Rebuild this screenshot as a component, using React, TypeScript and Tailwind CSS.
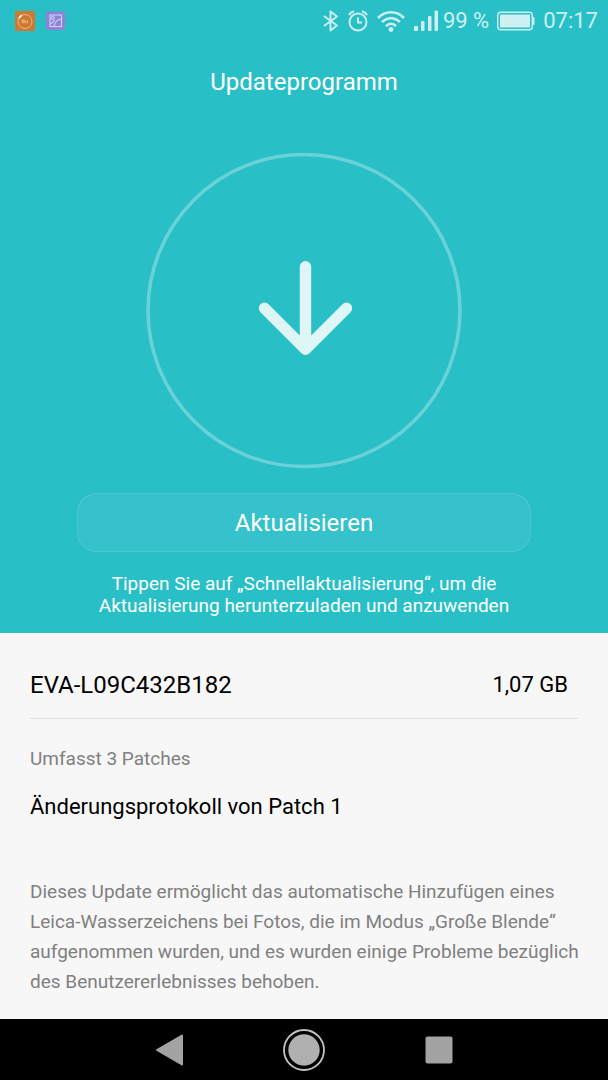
const CHANGES =
  'Dieses Update ermöglicht das automatische Hinzufügen eines Leica-Wasserzeichens bei Fotos, die im Modus „Große Blende“ aufgenommen wurden, und es wurden einige Probleme bezüglich des Benutzererlebnisses behoben.';

function MiAppIcon() {
  return (
    <svg width="20" height="20" viewBox="0 0 20 20" fill="none">
      <rect width="20" height="20" rx="1.5" fill="#cf7830" />
      <circle cx="10" cy="10.5" r="7" stroke="#e9b98c" strokeWidth="1" />
      <path d="M3.5 6.5 6.5 3.8" stroke="#cf7830" strokeWidth="4" />
      <path d="M4 7 6.8 4.2" stroke="#fff" strokeWidth="1.8" />
      <path d="M7.3 12.2V9.2h2.2q.9 0 .9.9v2.1M8.9 10.3v1.9M12.3 9.2v3" stroke="#efc9a6" strokeWidth="0.9" />
    </svg>
  );
}

function GalleryIcon() {
  return (
    <svg width="20" height="20" viewBox="0 0 20 20" fill="none">
      <rect y="0.5" width="19" height="18.5" rx="3.5" fill="#957ed8" />
      <g stroke="#b9dcf3" strokeWidth="1.1">
        <rect x="4" y="4" width="11.5" height="11.5" />
        <circle cx="6.8" cy="7" r="1.5" />
        <path d="M8 15.5c.5-4 3.5-7 7.5-7.500M4.500 13 8.500 9.500" />
      </g>
    </svg>
  );
}

function BluetoothIcon() {
  return (
    <svg width="16" height="22" viewBox="0 0 16 22" fill="none" stroke="currentColor" strokeWidth="1.9">
      <path d="M1 6 14 15.5 7.5 20.5V1.5L14 6.5 1 16" strokeLinejoin="round" />
    </svg>
  );
}

function AlarmIcon() {
  return (
    <svg width="20" height="22" viewBox="0 0 20 22" fill="none" stroke="currentColor" strokeWidth="1.9">
      <circle cx="10" cy="12" r="8.5" />
      <path d="M10 7.5V12.5H14M1 5Q2.500 2 6 1.200M19 5Q17.500 2 14 1.200" />
    </svg>
  );
}

function WifiIcon() {
  return (
    <svg width="28" height="22" viewBox="0 0 28 22" fill="none" stroke="currentColor" strokeWidth="2.6">
      <path d="M1 8Q6.500 2.300 14 2.300T27 8M5 12.200Q9 8.200 14 8.200T23 12.200M9 16.200Q11.200 13.800 14 13.800T19 16.200" />
      <circle cx="14" cy="19.5" r="2.4" fill="currentColor" stroke="none" />
    </svg>
  );
}

function SignalIcon() {
  return (
    <svg width="24" height="22" viewBox="0 0 24 22" fill="currentColor">
      <rect y="16" width="4" height="5" rx="1" />
      <rect x="7" y="11" width="3.500" height="10" rx="1" />
      <rect x="14" y="6" width="3.500" height="15" rx="1" />
      <rect x="20.500" y="0.500" width="3.500" height="20.500" rx="1" />
    </svg>
  );
}

function BatteryIcon() {
  return (
    <svg width="38" height="20" viewBox="0 0 38 20">
      <rect x="0.7" y="1.2" width="34.6" height="17.6" rx="3" fill="none" stroke="currentColor" strokeWidth="1.4" />
      <rect x="3" y="3.5" width="30" height="13" fill="currentColor" />
      <path d="M35.5 6h1q1 0 1 1v6q0 1-1 1h-1z" fill="currentColor" />
    </svg>
  );
}

function StatusBar() {
  return (
    <div className="flex h-[41px] items-center justify-between pl-[15px] pr-[10px] text-[22px] text-[#cdf0f2]">
      <div className="flex items-center gap-[11px]">
        <MiAppIcon />
        <GalleryIcon />
      </div>
      <div className="flex items-center">
        <div className="mr-[5px] flex items-center gap-[9px]">
          <BluetoothIcon />
          <AlarmIcon />
          <WifiIcon />
          <SignalIcon />
        </div>
        <span className="mr-2">99 %</span>
        <BatteryIcon />
        <span className="ml-2">07:17</span>
      </div>
    </div>
  );
}

function DownloadCircle() {
  return (
    <svg width="316" height="316" viewBox="0 0 316 316" fill="none" className="text-white">
      <circle cx="158" cy="157.5" r="156" stroke="currentColor" strokeOpacity="0.3" strokeWidth="3.5" />
      <path
        d="M159.500 113.700V196M118.500 155.300l41 41 41-41"
        stroke="#dff6f7"
        strokeWidth="11.4"
        strokeLinecap="round"
        strokeLinejoin="round"
      />
    </svg>
  );
}

function NavBar() {
  return (
    <nav className="mt-auto flex h-[61px] items-center justify-center gap-24 bg-black">
      <button type="button" aria-label="Zurück" className="flex w-[35px] justify-center">
        <svg width="30" height="34" viewBox="0 0 30 34">
          <path d="M2 17 27 2.500V31.500Z" fill="#a3a3a3" stroke="#a3a3a3" strokeWidth="2" strokeLinejoin="round" />
        </svg>
      </button>
      <button type="button" aria-label="Startseite">
        <svg width="42" height="42" viewBox="0 0 42 42">
          <circle cx="21" cy="21" r="20" fill="none" stroke="#c4c4c4" strokeWidth="1.8" />
          <circle cx="21" cy="21" r="15.7" fill="#b0b0b0" />
        </svg>
      </button>
      <button type="button" aria-label="Letzte Apps" className="flex w-[35px] justify-center">
        <svg width="28" height="28" viewBox="0 0 28 28">
          <rect x="0.5" y="0.5" width="27" height="27" rx="2" fill="#a3a3a3" />
        </svg>
      </button>
    </nav>
  );
}

export default function App() {
  return (
    <div className="flex min-h-screen flex-col bg-[#f7f7f7] font-['Roboto',sans-serif] text-black">
      {/* Header */}
      <header className="flex flex-col bg-[#29bfc7] pb-4 text-white">
        <StatusBar />
        <h1 className="mt-[23px] text-center text-[24px] leading-9">Updateprogramm</h1>
        <div className="mt-[53px] flex justify-center">
          <DownloadCircle />
        </div>
        <div className="mt-6 px-[77px]">
          <button
            type="button"
            className="h-[59px] w-full rounded-[20px] border border-white/10 bg-white/6 text-[24px]"
          >
            Aktualisieren
          </button>
        </div>
        <p className="mt-[21px] px-20 text-center text-[19px] leading-[22px]">
          Tippen Sie auf „Schnellaktualisierung“, um die Aktualisierung herunterzuladen und anzuwenden
        </p>
      </header>

      {/* Version info */}
      <main className="pb-4 pl-[30px]">
        <div className="mr-[30px] flex h-[86px] items-center justify-between border-b border-[#dedede] pt-[18px] pr-[10px]">
          <h2 className="text-[24px]">EVA-L09C432B182</h2>
          <span className="text-[22px]">1,07 GB</span>
        </div>
        <p className="mt-7 text-[19px] leading-6 text-[#808080]">Umfasst 3 Patches</p>
        <h3 className="mt-5 text-[22px] leading-8">Änderungsprotokoll von Patch 1</h3>
        <p className="mt-[54px] pr-4 text-[19px] leading-[30px] text-[#808080]">{CHANGES}</p>
      </main>

      <NavBar />
    </div>
  );
}
